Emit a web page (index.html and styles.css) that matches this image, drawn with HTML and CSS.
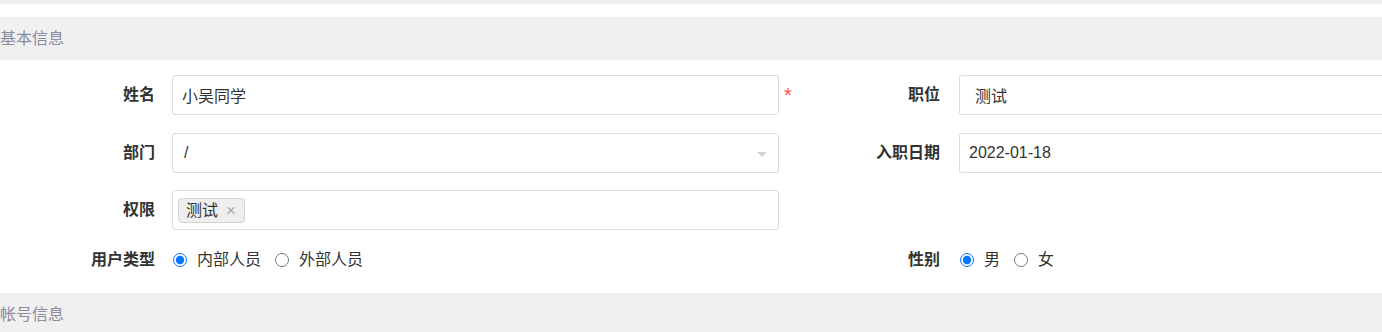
FILE: index.html
```html
<!DOCTYPE html>
<html lang="zh-CN">
<head>
<meta charset="utf-8">
<title>基本信息</title>
<link rel="stylesheet" href="styles.css">
</head>
<body>
<div class="top-strip"></div>
<div class="section-title">基本信息</div>
<div class="form">
  <div class="row">
    <label class="label">姓名</label>
    <div class="field">小吴同学</div>
    <span class="req">*</span>
    <label class="label label-right">职位</label>
    <div class="field field-select-pad">测试</div>
  </div>
  <div class="row">
    <label class="label">部门</label>
    <div class="field field-select">/<span class="arrow"></span></div>
    <span class="req"></span>
    <label class="label label-right">入职日期</label>
    <div class="field">2022-01-18</div>
  </div>
  <div class="row">
    <label class="label">权限</label>
    <div class="field field-tags"><span class="tag">测试<span class="tag-x">×</span></span></div>
  </div>
  <div class="row row-radio">
    <label class="label">用户类型</label>
    <div class="radios radios-left">
      <label class="radio"><input type="radio" name="utype" checked><span>内部人员</span></label>
      <label class="radio"><input type="radio" name="utype"><span>外部人员</span></label>
    </div>
    <span class="req"></span>
    <label class="label label-right">性别</label>
    <div class="radios">
      <label class="radio"><input type="radio" name="sex" checked><span>男</span></label>
      <label class="radio"><input type="radio" name="sex"><span>女</span></label>
    </div>
  </div>
</div>
<div class="section-title">帐号信息</div>
</body>
</html>
```
FILE: styles.css
```css
html, body {
  margin: 0;
  padding: 0;
}
body {
  width: 1382px;
  overflow: hidden;
  background: #fff;
  font-family: "Liberation Sans", "Noto Sans CJK SC", sans-serif;
  font-size: 16px;
  color: #333;
}
.top-strip {
  height: 4px;
  background: #efefef;
  margin-bottom: 13px;
}
.section-title {
  height: 43px;
  line-height: 43px;
  background: #f0f0f0;
  color: #8c8c9e;
  font-size: 16px;
  white-space: nowrap;
}
.form {
  padding: 15px 0 21px;
  display: flex;
  flex-direction: column;
  gap: 17.5px;
}
.row {
  display: flex;
  align-items: center;
  height: 40px;
  white-space: nowrap;
}
.row-radio {
  height: 24px;
}
.label {
  flex: none;
  width: 155px;
  margin-right: 17px;
  text-align: right;
  font-weight: 700;
  color: #333;
  line-height: 24px;
}
.label-right {
  width: 137px;
  margin-right: 19px;
}
.field {
  flex: none;
  box-sizing: border-box;
  width: 607px;
  height: 40px;
  border: 1px solid #dcdcdc;
  border-radius: 3px;
  padding: 0 9px;
  display: flex;
  align-items: center;
  color: #333;
  background: #fff;
}
.field-select-pad {
  padding-left: 15px;
}
.field-select {
  position: relative;
  padding-left: 11px;
}
.arrow {
  position: absolute;
  right: 11px;
  top: 18px;
  width: 0;
  height: 0;
  border-left: 5px solid transparent;
  border-right: 5px solid transparent;
  border-top: 5px solid #d4d4d4;
}
.field-tags {
  padding-left: 5px;
}
.tag {
  display: inline-flex;
  align-items: center;
  box-sizing: border-box;
  height: 25px;
  padding: 0 8px 0 7px;
  background: #eeeeee;
  border: 1px solid #d3d3d3;
  border-radius: 4px;
  color: #333;
  line-height: 23px;
}
.tag-x {
  margin-left: 8px;
  color: #aaa;
  font-size: 17px;
}
.req {
  flex: none;
  width: 24px;
  box-sizing: border-box;
  padding-left: 5px;
  color: #ff4d4f;
  font-size: 20px;
  align-self: flex-start;
  line-height: 40px;
}
.radios {
  flex: none;
  display: flex;
  align-items: center;
  gap: 13px;
}
.radios-left {
  width: 607px;
}
.radio {
  display: flex;
  align-items: center;
  gap: 10px;
  line-height: 24px;
  color: #333;
}
.radio input {
  margin: 0 0 0 1px;
  width: 14px;
  height: 14px;
}
```
